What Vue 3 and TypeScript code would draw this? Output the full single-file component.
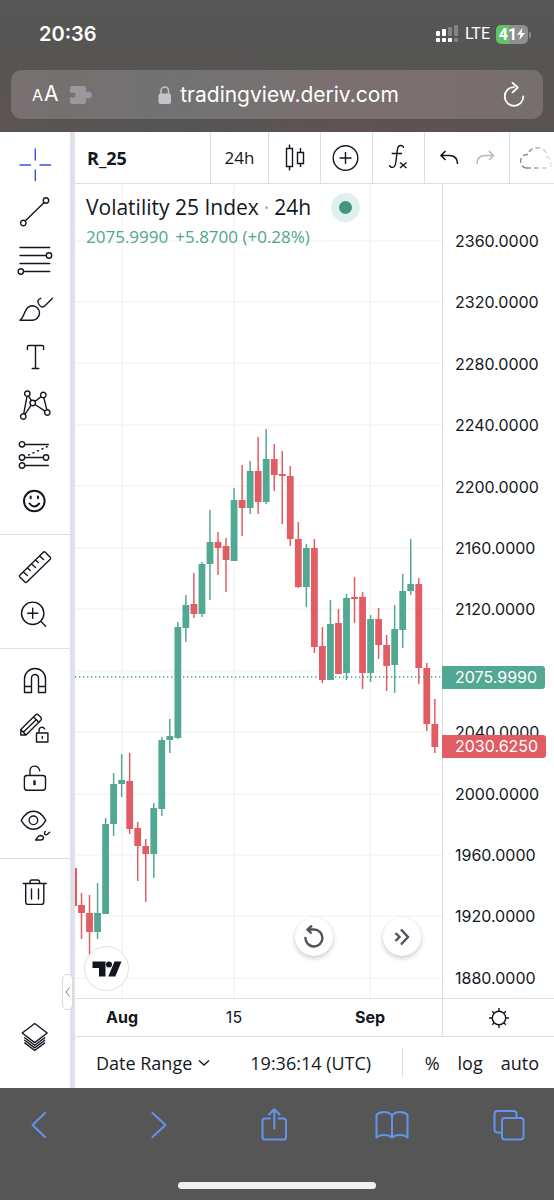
<script setup lang="ts">
type Candle = [up: number, high: number, top: number, bottom: number, low: number]

const CHART_W = 367
const CHART_H = 814
const STEP = 8.03

const candles: Candle[] = [
  [0, 709, 721, 729, 755], [0, 711, 729, 748, 772], [1, 699, 729, 748, 755], [1, 634, 640, 730, 730],
  [1, 589, 600, 640, 652], [1, 570, 596, 600, 613], [0, 569, 597, 645, 650], [0, 638, 644, 662, 697],
  [0, 655, 662, 670, 718], [1, 619, 624, 670, 694], [1, 553, 556, 625, 632], [1, 535, 552, 556, 569],
  [1, 438, 443, 554, 555], [1, 411, 421, 444, 458], [0, 389, 420, 430, 434], [1, 378, 380, 430, 433],
  [1, 326, 358, 380, 416], [0, 348, 358, 364, 391], [0, 354, 362, 376, 408], [1, 304, 316, 377, 377],
  [0, 281, 316, 324, 352], [1, 277, 287, 324, 330], [0, 253, 287, 318, 330], [1, 245, 275, 318, 320],
  [0, 260, 275, 291, 307], [0, 267, 290, 292, 340], [0, 282, 292, 355, 362], [0, 338, 355, 403, 404],
  [1, 360, 364, 403, 423], [0, 355, 364, 463, 469], [0, 443, 462, 496, 499], [1, 416, 440, 496, 496],
  [0, 425, 439, 490, 490], [1, 410, 414, 489, 496], [0, 393, 413, 415, 439], [0, 408, 413, 489, 505],
  [1, 431, 435, 489, 498], [0, 424, 435, 461, 475], [0, 451, 461, 482, 507], [1, 421, 445, 481, 509],
  [1, 390, 407, 446, 464], [1, 355, 400, 407, 411], [0, 394, 400, 484, 500], [0, 479, 484, 540, 547],
  [0, 515, 540, 563, 569],
]

const bars = candles.map(([up, high, top, bottom, low], i) => ({
  x: 6.5 + STEP * i,
  cls: up ? 'up' : 'down',
  high,
  top,
  bottom,
  low,
}))

const prices = Array.from({ length: 13 }, (_, i) => 2360 - 40 * i)
const rows = prices.map((_, i) => Math.round(56.5 + 61.45 * i))
const lastPrice = 2075.999

// a tick label gives way to the last-price tag when the two would collide
const isCovered = (p: number) => Math.abs(p - lastPrice) < 7

const dates = [
  { label: 'Aug', x: 47, major: true },
  { label: '15', x: 159, major: false },
  { label: 'Sep', x: 295, major: true },
]

interface Tool { name: string; paths: string; cls?: string }

const circle = (x: number, y: number, r = 2.7) => `M${x - r} ${y}a${r} ${r} 0 1 0 ${2 * r} 0a${r} ${r} 0 1 0 ${-2 * r} 0`

const groups: Tool[][] = [
  [
    { name: 'Cross', cls: 'active', paths: 'M7 22H17.5M27 22H37.5M22.3 6V17M22.3 27V37.5' },
    { name: 'Trend line', paths: `${circle(33, 9.5)}${circle(10.3, 32)}M12.2 30.1L31.1 11.4` },
    { name: 'Fib retracement', paths: `M7 8.5H36.7M7 16.5H33.3M7 24.5H36.7M10.5 32.5H36.7${circle(36, 16.5)}${circle(7.8, 32.5)}` },
    { name: 'Brush', paths: 'M7 33.3H19.5A7.3 7.3 0 0 0 26.5 26A7.3 7.3 0 0 0 19.5 18.7C15 18.7 13 21.5 11.5 26C10.5 29 9 31.5 7 33.3ZM27.7 11.3C24.5 12.5 24.2 14.5 26 17.5C28.5 21.5 30.5 20 32.5 18.2L39.5 11.3' },
    { name: 'Text', paths: 'M14.4 14.5V12Q14.4 10.5 16 10.5H29Q30.6 10.5 30.6 12V14.5M22.5 10.5V33.5M19.2 33.5H25.8' },
    { name: 'XABCD pattern', paths: `${circle(14.3, 10.7)}${circle(30.3, 12)}${circle(19.7, 20)}${circle(34.3, 29.5)}${circle(10.3, 33.5)}M14 13.4L10.7 30.8M15.5 13.1L18.5 17.6M22 18.5L28.1 13.6M30.8 14.7L33.8 26.8M22 21.5L32 28.1M18.1 22.2L12 31.4` },
    { name: 'Long position', paths: `${circle(9, 13.3)}${circle(9, 26.5)}${circle(33, 26.5)}${circle(9, 34.5)}M11.7 13.5H35.3M11.7 26.5H30.3M11.7 34.5H35.3M15.5 24L16.5 23.6M20 22L21 21.6M24.5 20L25.5 19.6M29 18L30 17.6M33.3 16L34.3 15.6` },
    { name: 'Icon', cls: 'bold', paths: `${circle(21.3, 22, 10.3)}M16.5 24.5Q21.3 30.5 26.2 24.5M17.7 17.5V19.3M25 17.5V19.3` },
  ],
  [
    { name: 'Measure', paths: 'M6.8 30.2L30.3 7.2Q31.3 6.3 32.3 7.2L37.2 12.3Q38 13.3 37.2 14.2L13.9 37Q12.9 37.9 11.9 37L6.8 32Q6 31.1 6.8 30.2ZM10.5 27L14.3 30.5M14.7 23L17.2 25.5M18.7 19L22.5 22.5M22.7 15L25.2 17.5M26.7 11L30.5 14.5' },
    { name: 'Zoom in', paths: `${circle(19.7, 20.3, 11.2)}M14.7 20.3H24.7M19.7 15.3V25.3M28 28.5L32.7 33.2` },
  ],
  [
    { name: 'Magnet mode', paths: 'M11.5 33.5V20A10.5 10.5 0 0 1 32.5 20V33.5H25.5V19A3.5 3.5 0 0 0 18.5 19V33.5ZM11.5 27.5H18.5M25.5 27.5H32.5' },
    { name: 'Stay in drawing mode', paths: 'M7.8 22.5L22.5 8Q24 6.6 25.5 8L28 10.5Q29 12 27.8 13.2L13 28H7.8ZM7.8 22.5L13 28M20.5 10L26 15.5M10.5 25L23.5 12.5M23.5 26H34.9V35H23.5ZM26 26V23.5C26 19.8 30 19.3 31.7 22M29.3 29.5V31.5' },
    { name: 'Lock all drawings', paths: 'M14 20.5H29.8Q32.5 20.5 32.5 23V32.5Q32.5 35.2 29.8 35.2H14Q11.4 35.2 11.4 32.5V23Q11.4 20.5 14 20.5ZM17 20.5V16C17 9.5 25.5 9.5 26.7 15.7M21 26V29.5M22 26V29.5M21.5 26V29.5' },
    { name: 'Hide all drawings', paths: `M8.2 17.3C11.5 11.5 15.5 8.3 20.5 8.3S29.5 11.5 32.8 17.3C29.5 23 25.5 26.2 20.5 26.2S11.5 23 8.2 17.3Z${circle(20.4, 17.3, 4.3)}M22.5 37C24.3 35.5 24.5 32.7 27.5 32.5C31.5 32.5 31.3 37 27.5 37ZM32.3 28.5C30.5 30 32 32.7 34 31.5L36.7 29.3` },
  ],
  [
    { name: 'Remove drawings', paths: 'M10.3 14.5H33.3M17 14.5V13Q17 11 19 11H24.5Q26.6 11 26.6 13V14.5M12.7 14.5V33Q12.7 35.4 15 35.4H28.5Q30.8 35.4 30.8 33V14.5M18.5 20V30M25.5 20V30' },
  ],
]
</script>

<template>
  <div class="screen">
    <header class="browser-top">
      <div class="status">
        <time class="clock">20:36</time>
        <div class="indicators">
          <svg class="signal" width="23" height="18" viewBox="0 0 23 18" aria-hidden="true">
            <rect x="0" y="6" width="4" height="5" rx="1" /><rect x="6" y="4" width="4" height="7" rx="1" />
            <rect class="dim" x="12" y="2" width="4" height="9" rx="1" /><rect class="dim" x="18" y="0" width="4" height="11" rx="1" />
            <rect x="0" y="13" width="4" height="4" rx="1" /><rect x="6" y="13" width="4" height="4" rx="1" />
            <rect x="12" y="13" width="4" height="4" rx="1" /><rect class="dim" x="18" y="13" width="4" height="4" rx="1" />
          </svg>
          <span class="network">LTE</span>
          <span class="battery">41<svg width="8" height="12" viewBox="0 0 8 12" aria-hidden="true"><path d="M5.5 0L0 6.8H3.4L2.3 12L8 5H4.5Z" /></svg></span>
        </div>
      </div>
      <div class="address">
        <button class="aa" type="button" aria-label="Page settings"><small>A</small>A</button>
        <svg class="puzzle" width="22" height="18" viewBox="0 0 22 18" aria-hidden="true">
          <path d="M2 0H14Q16 0 16 2V5.5Q17.5 6 18.5 5.5Q22 6 22 9T18.5 12.5Q17 12 16 12.5V16Q16 18 14 18H2Q0 18 0 16V11.5Q1 11 2.5 11.6Q5.5 11.6 5.5 9T2.5 6.4Q1 7 0 6.5V2Q0 0 2 0Z" />
        </svg>
        <a class="url" href="#">
          <svg width="14" height="18" viewBox="0 0 14 18" aria-hidden="true">
            <rect x="0.5" y="7.5" width="12.5" height="10.5" rx="2" /><path d="M3 8V5C3 -0.3 10.5 -0.3 10.5 5V8" />
          </svg>
          tradingview.deriv.com
        </a>
        <button class="reload" type="button" aria-label="Reload">
          <svg width="22" height="26" viewBox="0 0 22 26" aria-hidden="true"><path d="M11 5.2A9.3 9.3 0 1 0 20.3 14.5M9.5 0.8L14.8 5.5L9.5 10.5" /></svg>
        </button>
      </div>
    </header>

    <main class="workspace">
      <nav class="tools" aria-label="Drawing tools">
        <div v-for="(group, g) in groups" :key="g" class="group">
          <button v-for="t in group" :key="t.name" type="button" :aria-label="t.name" :class="t.cls">
            <svg width="44" height="44" viewBox="0 0 44 44"><path :d="t.paths" /></svg>
          </button>
        </div>
        <div class="group last">
          <button type="button" aria-label="Object tree">
            <svg width="44" height="44" viewBox="0 0 44 44"><path d="M21.7 8.5L34.2 18L21.7 27.6L9.2 18ZM11.7 22.7L21.7 30.3L31.7 22.7M11.7 25.2L21.7 32.9L31.7 25.2M11.7 27.9L21.7 35.5L31.7 27.9" /></svg>
          </button>
        </div>
        <button class="collapse" type="button" aria-label="Hide toolbar">
          <svg width="6" height="10" viewBox="0 0 6 10"><path d="M4.5 0.5L1 5L4.5 9.5" /></svg>
        </button>
      </nav>

      <section class="panel">
        <div class="topbar">
          <button class="symbol" type="button">R_25</button>
          <button class="interval" type="button">24h</button>
          <button class="cell" type="button" aria-label="Candles">
            <svg width="44" height="44" viewBox="0 0 44 44"><path d="M13.5 12.5H19.5V30.5H13.5ZM16.5 8.5V12.5M16.5 30.5V34.5M24.5 16.5H30.5V27.5H24.5ZM27.5 12V16.5M27.5 27.5V31" /></svg>
          </button>
          <button class="cell" type="button" aria-label="Compare">
            <svg width="44" height="44" viewBox="0 0 44 44"><circle cx="20.5" cy="22" r="12.3" /><path d="M14.5 22H26.5M20.5 16V28" /></svg>
          </button>
          <button class="cell" type="button" aria-label="Indicators">
            <svg width="44" height="44" viewBox="0 0 44 44"><path d="M26.5 12C26.5 8.5 21 8.5 20.5 13L18.7 27C18 32.5 13 32.5 12.5 29M14.7 17.5H25M23 26.5L29.5 32M29.5 26.5L23 32" /></svg>
          </button>
          <div class="history">
            <button type="button" aria-label="Undo">
              <svg width="20" height="20" viewBox="0 0 20 20"><path d="M6.5 3L2 7.5L6.5 12M2 7.5H11Q18.5 8 18.5 16" /></svg>
            </button>
            <button type="button" aria-label="Redo" disabled>
              <svg width="20" height="20" viewBox="0 0 20 20"><path d="M13 3L17.5 7.5L13 12M17.5 7.5H8.5Q1 8 1 16" /></svg>
            </button>
          </div>
          <button class="save" type="button" aria-label="Save layout">
            <svg width="36" height="24" viewBox="0 0 36 24">
              <defs><linearGradient id="fade"><stop offset="0.3" stop-color="#8c8e95" /><stop offset="0.95" stop-color="#e4e5e9" /></linearGradient></defs>
              <path d="M7 22H29C33 21.5 34 12 28 11C28 -1 10 -1 9.5 8.5C0 7.5 -1 20.5 7 22Z" />
            </svg>
          </button>
        </div>

        <div class="chart-row">
          <div class="chart">
            <svg class="plot" :viewBox="`0 0 ${CHART_W} ${CHART_H}`" preserveAspectRatio="none" role="img" aria-label="Volatility 25 Index candles">
              <line v-for="y in rows" :key="y" class="grid" x1="0" :x2="CHART_W" :y1="y" :y2="y" />
              <line v-for="d in dates" :key="d.label" class="grid" :x1="d.x" :x2="d.x" y1="0" :y2="CHART_H" />
              <rect class="down" x="0" y="684" width="2" height="38" />
              <g v-for="b in bars" :key="b.x" :class="b.cls">
                <line class="wick" :x1="b.x" :x2="b.x" :y1="b.high" :y2="b.low" />
                <rect :x="b.x - 3.4" :y="b.top" width="6.8" :height="b.bottom - b.top" />
              </g>
              <line class="last-price" x1="0" :x2="CHART_W" y1="493" y2="493" />
            </svg>
            <div class="legend">
              <h1>Volatility 25 Index <i>·</i> 24h <span class="dot"></span></h1>
              <p><span>2075.9990</span><span>+5.8700 (+0.28%)</span></p>
            </div>
            <a class="brand" href="#" aria-label="TradingView">
              <svg width="30" height="16" viewBox="0 0 30 16"><path d="M0.5 0.5H13.5V15.5H7V7H0.5ZM22.5 0.5H29.5L23.3 15.5H16.3Z" /><circle cx="17" cy="3.5" r="3" /></svg>
            </a>
            <button class="round reset" type="button" aria-label="Reset chart">
              <svg width="24" height="24" viewBox="0 0 24 24"><path d="M3.5 12A8.5 8.5 0 1 0 12 4.5H6M10 0.5L5.5 4.5L9.5 8.5" /></svg>
            </button>
            <button class="round forward" type="button" aria-label="Scroll to the latest bar">
              <svg width="24" height="24" viewBox="0 0 24 24"><path d="M5.5 8L9.5 12L5.5 16M11 4.5L18 12L11 19.5" /></svg>
            </button>
          </div>
          <div class="scale">
            <span v-for="p in prices" :key="p">{{ isCovered(p) ? '\u00a0' : p.toFixed(4) }}</span>
            <output class="tag green">{{ lastPrice.toFixed(4) }}</output>
            <output class="tag red">2030.6250</output>
          </div>
        </div>

        <div class="time-row">
          <div class="dates">
            <span v-for="d in dates" :key="d.label" :class="{ major: d.major }" :style="{ left: (d.x / CHART_W) * 100 + '%' }">{{ d.label }}</span>
          </div>
          <button class="settings" type="button" aria-label="Chart settings">
            <svg width="24" height="24" viewBox="0 0 24 24"><circle cx="12" cy="12" r="6.7" /><path d="M12 5V2M12 19V22M5 12H2M19 12H22M7.2 7.2L5.2 5.2M16.8 7.2L18.8 5.2M7.2 16.8L5.2 18.8M16.8 16.8L18.8 18.8" /></svg>
          </button>
        </div>

        <footer class="bottombar">
          <button class="range" type="button">Date Range <svg width="12" height="8" viewBox="0 0 12 8"><path d="M1 1.5L6 6L11 1.5" /></svg></button>
          <button class="utc" type="button">19:36:14 (UTC)</button>
          <div class="modes">
            <button type="button">%</button>
            <button type="button">log</button>
            <button type="button">auto</button>
          </div>
        </footer>
      </section>
    </main>

    <footer class="browser-bottom">
      <nav aria-label="Browser">
        <button type="button" aria-label="Back"><svg width="36" height="36" viewBox="0 0 36 36"><path d="M24 6L11.5 18L24 30" /></svg></button>
        <button type="button" aria-label="Forward"><svg width="36" height="36" viewBox="0 0 36 36"><path d="M13.5 6L26.5 18L13.5 30" /></svg></button>
        <button type="button" aria-label="Share"><svg width="36" height="36" viewBox="0 0 36 36"><path d="M14 11.5H9Q6.500 11.5 6.5 14V30Q6.5 32.5 9 32.5H27.5Q30 32.5 30 30V14Q30 11.5 27.5 11.5H22.5M18.3 21.5V2.5M13 7.5L18.3 2.2L23.6 7.5" /></svg></button>
        <button type="button" aria-label="Bookmarks"><svg width="36" height="36" viewBox="0 0 36 36"><path d="M18 8.5C14 4 6.5 4 2.5 8V30.5C6 27 14 27 18 30.5C22 27 30 27 33.5 30.5V8C29.5 4 22 4 18 8.5V30.5" /></svg></button>
        <button type="button" aria-label="Tabs"><svg width="36" height="36" viewBox="0 0 36 36"><rect x="11" y="11" width="21.5" height="21.5" rx="3" /><path d="M11 25.5H6.5Q3.5 25.5 3.5 22.5V7Q3.5 4 6.5 4H22.5Q25.5 4 25.5 7V11" /></svg></button>
      </nav>
      <div class="home"></div>
    </footer>
  </div>
</template>

<style>
body {
  margin: 0;
}
</style>

<style scoped>
.screen {
  --ui: "Open Sans", "Noto Sans", sans-serif;
  --ink: #131722;
  --line: #dcdee6;
  --up: #53a893;
  --down: #e25d63;
  display: flex;
  flex-direction: column;
  min-height: 100vh;
  background: #fff;
  color: var(--ink);
  font-family: Inter, "Liberation Sans", sans-serif;
}
button {
  display: flex;
  align-items: center;
  justify-content: center;
  margin: 0;
  padding: 0;
  border: 0;
  background: none;
  color: inherit;
  font: inherit;
}
a {
  color: inherit;
  text-decoration: none;
}
svg {
  display: block;
  flex: none;
  fill: none;
  stroke: currentColor;
  stroke-width: 1.4;
}

/* browser chrome */
.browser-top {
  box-sizing: border-box;
  height: 132px;
  padding: 18px 11px 0;
  background: linear-gradient(180deg, #565656 0, #565554 45%, rgba(86, 85, 84, 0) 80%), linear-gradient(90deg, #5b5452, #565555 35%, #5f5253 62%, #585351);
  color: #fff;
}
.status {
  display: flex;
  align-items: center;
  justify-content: space-between;
  height: 32px;
  padding: 0 15px 0 28px;
}
.clock {
  font-size: 20px;
  font-weight: 600;
}
.indicators {
  display: flex;
  align-items: center;
  gap: 6px;
}
.signal {
  fill: #fff;
  stroke: none;
}
.signal .dim {
  fill: #858484;
}
.network {
  font-size: 16px;
  line-height: 20px;
  font-family: Roboto, sans-serif;
}
.battery {
  position: relative;
  display: flex;
  align-items: center;
  justify-content: center;
  width: 32px;
  height: 19px;
  border-radius: 5px;
  background: linear-gradient(90deg, #5fc466 42%, #8f8f8f 42%);
  font: 700 16px/19px Roboto, sans-serif;
}
.battery::after {
  content: "";
  position: absolute;
  right: -3px;
  top: 7px;
  width: 2px;
  height: 6px;
  border-radius: 0 2px 2px 0;
  background: #8f8f8f;
}
.battery svg {
  fill: #fff;
  stroke: none;
}
.address {
  display: grid;
  grid-template-columns: 38px 22px 1fr 22px;
  align-items: center;
  height: 49px;
  margin-top: 20px;
  padding: 0 18px 0 21px;
  border-radius: 11px;
  background: linear-gradient(90deg, #777070, #727272 30%, #7a7070 60%, #7b6e6e 80%, #756f6e);
}
.aa {
  align-items: baseline;
  justify-content: flex-start;
  font-size: 21px;
  line-height: 28px;
  gap: 1px;
}
.aa small {
  font-size: 16px;
}
.puzzle {
  fill: #99989e;
  stroke: none;
}
.url {
  display: flex;
  align-items: center;
  justify-content: center;
  gap: 8px;
  font-size: 21px;
  line-height: 28px;
  padding-right: 38px;
}
.url svg {
  color: #c5c3ca;
  stroke-width: 1.5;
}
.url rect {
  fill: #c5c3ca;
  stroke: none;
}
.reload svg {
  stroke-width: 1.8;
  stroke-linecap: round;
  stroke-linejoin: round;
}
.browser-bottom {
  display: flex;
  flex-direction: column;
  align-items: center;
  box-sizing: border-box;
  height: 112px;
  padding: 15px 0 11px;
  background: #565656;
}
.browser-bottom nav {
  display: flex;
  justify-content: space-between;
  box-sizing: border-box;
  width: 100%;
  padding: 0 23px 0 17px;
}
.browser-bottom button {
  width: 44px;
  height: 44px;
  color: #6494ef;
}
.browser-bottom svg {
  stroke-width: 2;
  stroke-linecap: round;
  stroke-linejoin: round;
}
.home {
  width: 198px;
  height: 7px;
  margin-top: auto;
  border-radius: 4px;
  background: #efefef;
}

/* workspace */
.workspace {
  display: flex;
  flex: 1;
}
.tools {
  position: relative;
  display: flex;
  flex-direction: column;
  flex: none;
  width: 70px;
  padding-top: 1px;
  border-right: 5px solid #dee1e8;
}
.group {
  padding: 8px 0 9px;
  border-bottom: 1px solid var(--line);
}
.group:nth-last-child(-n + 3) {
  border-bottom: 0;
}
.group.last {
  margin-top: auto;
  padding-bottom: 27px;
}
.group button {
  width: 100%;
  height: 48px;
}
.group svg {
  stroke-linecap: round;
  stroke-linejoin: round;
}
.group .active {
  color: #3454e6;
}
.group .bold svg {
  stroke-width: 2;
}
.collapse {
  position: absolute;
  right: -3px;
  bottom: 78px;
  width: 11px;
  height: 36px;
  border: 1px solid #d6d8e0;
  border-radius: 5px;
  background: #fff;
  color: #787b86;
}
.collapse svg {
  stroke-width: 1;
}
.panel {
  display: flex;
  flex-direction: column;
  flex: 1;
  min-width: 0;
  font-family: var(--ui);
}
.topbar {
  display: flex;
  height: 51px;
  border-bottom: 1px solid var(--line);
  overflow: hidden;
}
.topbar > * {
  box-sizing: border-box;
  border-right: 1px solid var(--line);
}
.symbol {
  flex: 1;
  justify-content: flex-start;
  padding-left: 12px;
  font-size: 18px;
  font-weight: 700;
}
.interval {
  width: 58px;
  font-size: 17px;
}
.cell {
  width: 52px;
}
.history {
  display: flex;
  justify-content: center;
  width: 85px;
}
.history button {
  width: 37px;
}
.history button:disabled {
  color: #b6b8bf;
}
.history svg {
  stroke-width: 1.6;
}
.save {
  width: 44px;
  border-right: 0;
  justify-content: flex-start;
  padding-left: 9px;
}
.save path {
  stroke: url(#fade);
  stroke-dasharray: 5 3;
  stroke-width: 1.5;
}
.chart-row {
  display: flex;
  flex: 1;
}
.chart {
  position: relative;
  flex: 1;
  min-width: 0;
  min-height: 814px;
}
.plot {
  width: 100%;
  height: 100%;
  stroke: none;
}
.grid {
  stroke: #efeff1;
  stroke-width: 1;
}
.up {
  fill: var(--up);
  stroke: var(--up);
}
.down {
  fill: var(--down);
  stroke: var(--down);
}
.plot rect {
  stroke: none;
}
.wick {
  stroke-width: 1.5;
}
.last-price {
  stroke: #3f9d86;
  stroke-width: 1.4;
  stroke-dasharray: 1.3 2.7;
}
.legend {
  position: absolute;
  left: 11px;
  top: 8px;
}
.legend h1 {
  display: flex;
  align-items: center;
  gap: 5px;
  margin: 0;
  font-size: 21px;
  line-height: 30px;
  font-weight: 400;
  white-space: nowrap;
}
.legend i {
  color: #a3a6af;
  font-style: normal;
}
.dot {
  width: 13px;
  height: 13px;
  margin-left: 15px;
  border: 8px solid #e0f0ec;
  border-radius: 50%;
  background: #43957e;
}
.legend p {
  display: flex;
  gap: 7px;
  margin: 3px 0 0;
  color: #4fa68d;
  font-size: 17px;
  line-height: 24px;
  white-space: nowrap;
}
.brand {
  position: absolute;
  left: 9px;
  bottom: 7px;
  display: flex;
  align-items: center;
  justify-content: center;
  width: 43px;
  height: 43px;
  border: 1px solid #dfe0e4;
  border-radius: 50%;
  background: #fff;
}
.brand svg {
  fill: #131520;
  stroke: none;
}
.round {
  position: absolute;
  bottom: 42px;
  width: 38px;
  height: 38px;
  border-radius: 50%;
  background: #fff;
  box-shadow: 0 2px 5px rgba(0, 0, 0, 0.22);
  color: #50535e;
}
.round svg {
  stroke-width: 2.4;
}
.reset {
  right: 109px;
}
.forward {
  right: 21px;
}
.scale {
  position: relative;
  display: flex;
  flex-direction: column;
  justify-content: space-between;
  box-sizing: border-box;
  width: 112px;
  padding: 47px 0 10px 12px;
  border-left: 1px solid var(--line);
  font: 16px/20px Inter, sans-serif;
}
.tag {
  position: absolute;
  left: -1px;
  padding: 0 8px 0 13px;
  border-radius: 0 3px 3px 0;
  color: #fff;
  line-height: 23px;
}
.green {
  top: 482px;
  background: var(--up);
}
.red {
  top: 551px;
  background: var(--down);
}
.time-row {
  display: flex;
  height: 37px;
  border-top: 1px solid var(--line);
  border-bottom: 1px solid var(--line);
}
.dates {
  position: relative;
  flex: 1;
  font: 16px/37px Inter, sans-serif;
}
.dates span {
  position: absolute;
  top: 0;
  transform: translateX(-50%);
}
.dates .major {
  font-weight: 700;
}
.settings {
  box-sizing: border-box;
  width: 112px;
  border-left: 1px solid var(--line);
}
.bottombar {
  display: flex;
  align-items: center;
  height: 51px;
  padding: 0 15px 0 21px;
  font-size: 18px;
  white-space: nowrap;
}
.range {
  gap: 6px;
}
.utc {
  margin-left: 40px;
}
.modes {
  display: flex;
  align-items: center;
  gap: 18px;
  height: 29px;
  margin-left: auto;
  padding-left: 22px;
  border-left: 1px solid var(--line);
}
</style>
